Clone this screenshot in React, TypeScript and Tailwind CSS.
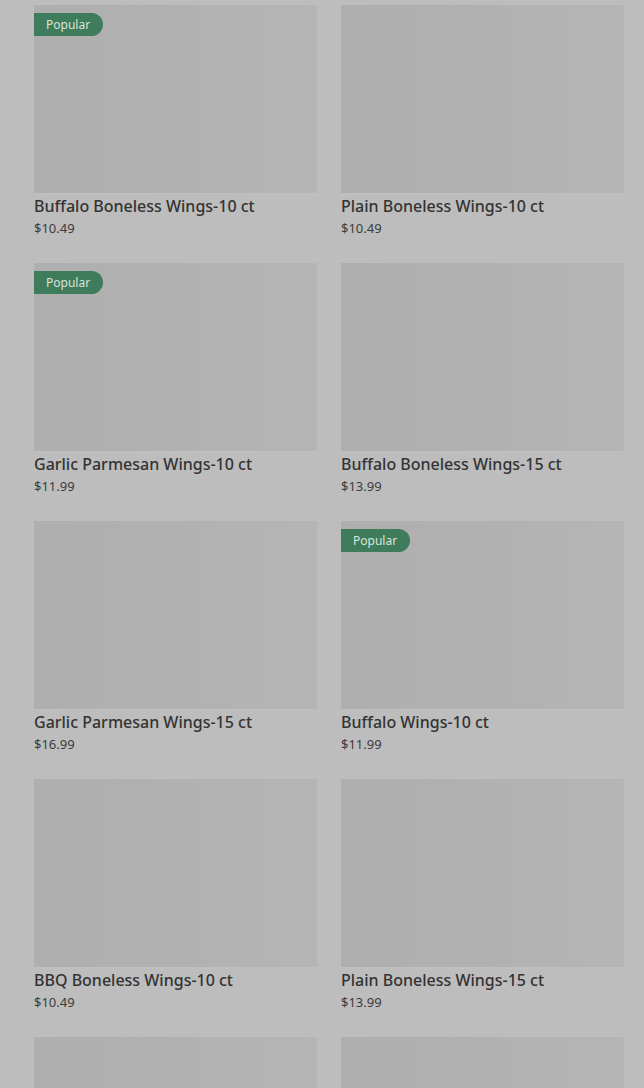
import React from 'react';

type Item = { name: string; price: string; popular?: boolean };

const ITEMS: Item[] = [
  { name: 'Buffalo Boneless Wings-10 ct', price: '$10.49', popular: true },
  { name: 'Plain Boneless Wings-10 ct', price: '$10.49' },
  { name: 'Garlic Parmesan Wings-10 ct', price: '$11.99', popular: true },
  { name: 'Buffalo Boneless Wings-15 ct', price: '$13.99' },
  { name: 'Garlic Parmesan Wings-15 ct', price: '$16.99' },
  { name: 'Buffalo Wings-10 ct', price: '$11.99', popular: true },
  { name: 'BBQ Boneless Wings-10 ct', price: '$10.49' },
  { name: 'Plain Boneless Wings-15 ct', price: '$13.99' },
  { name: '', price: '' },
  { name: '', price: '' },
];

const MenuCard = ({ item }: { item: Item }) => (
  <div className="flex flex-col">
    <div className="relative h-[188px] w-full bg-gradient-to-r from-[#afafaf] via-[#b1b1b1] to-[#b5b5b5]">
      {item.popular && (
        <span className="absolute left-0 top-[8px] flex h-[23px] items-center rounded-r-full bg-[#3f7c5b] pl-[12px] pr-[13px] text-[12px] leading-none text-[#d9e4dd]">
          Popular
        </span>
      )}
    </div>
    <div className="h-[2px] w-full bg-[#bfbfbf]" />
    <p className="text-[16px] font-medium leading-[22px] text-[#333333]">{item.name}</p>
    <p className="text-[13px] leading-[22px] text-[#3c3c3c]">{item.price}</p>
  </div>
);

export default function App() {
  return (
    <div
      className="h-[1088px] w-[644px] overflow-hidden bg-[#bdbdbd] pl-[34px] pr-[20px] pt-[5px]"
      style={{ fontFamily: '"Noto Sans", Inter, sans-serif' }}
    >
      <div className="grid grid-cols-2 gap-x-[24px] gap-y-[24px]">
        {ITEMS.map((item, i) => (
          <MenuCard key={i} item={item} />
        ))}
      </div>
    </div>
  );
}
